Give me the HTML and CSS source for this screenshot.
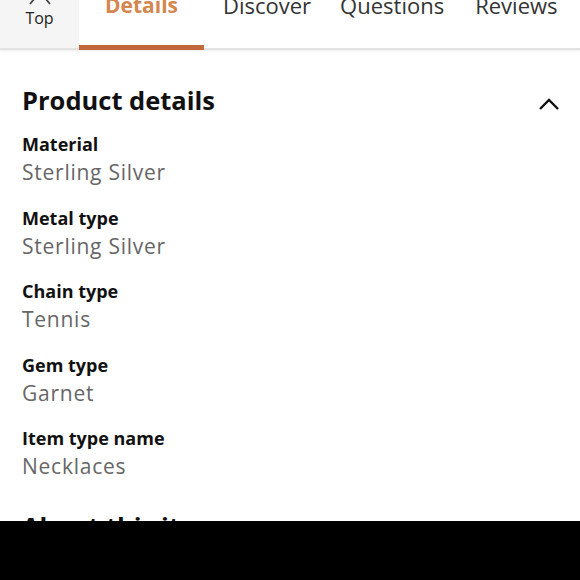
FILE: index.html
```html
<!DOCTYPE html>
<html>
<head>
<meta charset="utf-8">
<link rel="stylesheet" href="styles.css">
</head>
<body>
<div class="page">
  <header class="tabs">
    <div class="top-cell">
      <svg class="top-icon" width="24" height="6" viewBox="0 0 24 6"><path d="M2 4 L12 -8 L22 4" fill="none" stroke="#444" stroke-width="1.8"/></svg>
      <span class="top-label">Top</span>
    </div>
    <div class="tab tab-active"><span>Details</span></div>
    <div class="tab tab-discover"><span>Discover</span></div>
    <div class="tab tab-questions"><span>Questions</span></div>
    <div class="tab tab-reviews"><span>Reviews</span></div>
  </header>
  <main class="content">
    <div class="section-head">
      <h2>Product details</h2>
      <svg class="chevron" width="22" height="14" viewBox="0 0 22 14"><path d="M2 12 L11 3 L20 12" fill="none" stroke="#111" stroke-width="2.4"/></svg>
    </div>
    <dl class="specs">
      <div class="spec"><dt>Material</dt><dd>Sterling Silver</dd></div>
      <div class="spec"><dt>Metal type</dt><dd>Sterling Silver</dd></div>
      <div class="spec"><dt>Chain type</dt><dd>Tennis</dd></div>
      <div class="spec"><dt>Gem type</dt><dd>Garnet</dd></div>
      <div class="spec"><dt>Item type name</dt><dd>Necklaces</dd></div>
    </dl>
    <h2 class="about">About this item</h2>
  </main>
  <div class="black-bar"></div>
</div>
</body>
</html>
```
FILE: styles.css
```css
* { box-sizing: border-box; }
html, body { margin: 0; padding: 0; }
body {
  width: 580px;
  height: 580px;
  overflow: hidden;
  background: #fff;
  font-family: "Open Sans", "Noto Sans", sans-serif;
  color: #111;
}
.page {
  position: relative;
  width: 580px;
  height: 580px;
  overflow: hidden;
}
.tabs {
  display: flex;
  height: 50px;
  border-bottom: 2px solid #e2e2e2;
  box-shadow: 0 1px 2px rgba(0,0,0,0.08);
}
.top-cell {
  width: 79px;
  background: #f4f5f4;
  display: flex;
  flex-direction: column;
  align-items: center;
}
.top-icon { display: block; }
.top-label {
  font-size: 16px;
  line-height: 16px;
  color: #222;
  margin-top: 4px;
}
.tab {
  display: flex;
  justify-content: center;
  align-items: flex-start;
  font-size: 22px;
  line-height: 22px;
  color: #333;
  white-space: nowrap;
}
.tab span { margin-top: -6px; }
.tab-active {
  width: 125px;
  color: #d4874f;
  font-weight: 700;
  font-size: 21px;
  border-bottom: 5px solid #c2693b;
  margin-bottom: -2px;
}
.tab-discover { margin-left: 19px; }
.tab-questions { margin-left: 29px; }
.tab-reviews { margin-left: 31px; }
.content {
  padding: 34px 20px 0 22px;
}
.section-head {
  display: flex;
  justify-content: space-between;
  align-items: center;
  height: 32px;
}
.section-head h2 {
  margin: 0;
  font-size: 25.5px;
  font-weight: 700;
  line-height: 32px;
  color: #111;
}
.chevron { margin-top: 7px; }
.specs { margin: 16px 0 0 0; }
.spec { height: 73.5px; }
.spec dt {
  font-size: 18px;
  line-height: 24px;
  font-weight: 700;
  color: #111;
}
.spec dd {
  margin: 3px 0 0 0;
  font-size: 21px;
  line-height: 26px;
  letter-spacing: 0.75px;
  color: #666;
}
.about {
  margin: 10px 0 0 0;
  font-size: 25.5px;
  font-weight: 700;
  line-height: 32px;
}
.black-bar {
  position: absolute;
  left: 0;
  right: 0;
  top: 521px;
  bottom: 0;
  background: #000;
}
```
